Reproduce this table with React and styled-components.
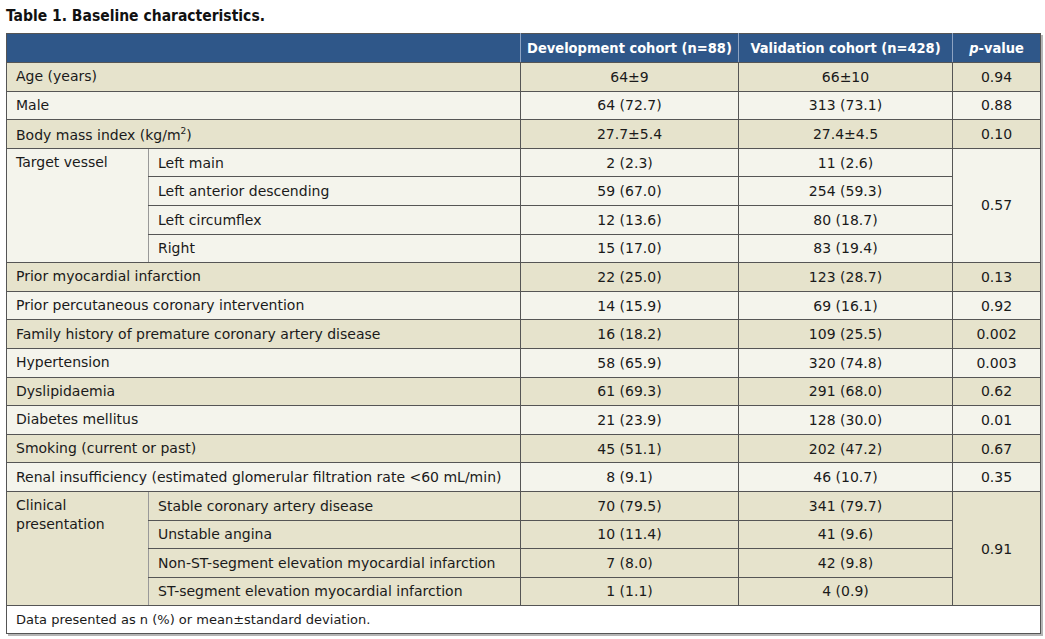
import React from "react";
import styled, { createGlobalStyle } from "styled-components";

const GlobalStyle = createGlobalStyle`
  html, body {
    margin: 0;
    padding: 0;
    background: #fff;
  }
  body {
    font-family: "DejaVu Sans", "Liberation Sans", sans-serif;
    color: #1a1a1a;
  }
`;

const Page = styled.div`
  width: 1045px;
  height: 639px;
  padding: 5px 0 0 6px;
  box-sizing: border-box;
`;

const Title = styled.h1`
  margin: 0 0 6px 0;
  font-family: "DejaVu Sans Condensed", "DejaVu Sans", sans-serif;
  font-stretch: condensed;
  font-weight: bold;
  font-size: 15.5px;
  line-height: 22px;
  color: #111;
`;

const Table = styled.table`
  width: 1034px;
  border-collapse: collapse;
  table-layout: fixed;
  font-size: 14px;
  border: 1px solid #555;
  box-shadow: 2px 2px 0 #b5b5b5;
`;

const HeadRow = styled.tr`
  background: #2f5789;
  height: 29px;
`;

const Th = styled.th`
  color: #fff;
  font-family: "DejaVu Sans Condensed", "DejaVu Sans", sans-serif;
  font-stretch: condensed;
  font-weight: bold;
  font-size: 14.5px;
  text-align: center;
  padding: 0 4px;
  border-left: 1px solid #8ea3c2;
  border-bottom: 1px solid #555;
  white-space: nowrap;
  &:first-child {
    border-left: none;
  }
`;

const Row = styled.tr`
  height: 28.6px;
  background: ${(p) => (p.$shade ? "#e6e3cc" : "#f4f4ec")};
`;

const Label = styled.td`
  padding: 0 9px;
  text-align: left;
  vertical-align: ${(p) => (p.$top ? "top" : "middle")};
  padding-top: ${(p) => (p.$top ? "4px" : "0")};
  line-height: 19px;
  border-bottom: 1px solid #555;
  border-left: 1px solid #555;
  white-space: ${(p) => (p.$wrap ? "normal" : "nowrap")};
`;

const Sub = styled.td`
  padding: 0 9px;
  text-align: left;
  border-bottom: 1px solid #555;
  border-left: 1px solid #999;
  white-space: nowrap;
`;

const Num = styled.td`
  text-align: center;
  border-bottom: 1px solid #555;
  border-left: 1px solid #555;
  white-space: nowrap;
`;

const Sup = styled.sup`
  font-size: 9px;
`;

const FootRow = styled.tr`
  height: 28px;
  background: #fff;
`;

const Foot = styled.td`
  padding: 0 9px;
  font-size: 13px;
`;

const simpleRows = (rows, startShade) =>
  rows.map((r, i) => (
    <Row key={i} $shade={(i + startShade) % 2 === 0}>
      <Label colSpan={2}>{r[0]}</Label>
      <Num>{r[1]}</Num>
      <Num>{r[2]}</Num>
      <Num>{r[3]}</Num>
    </Row>
  ));

const groupRows = (label, items, p, shade) =>
  items.map((r, i) => (
    <Row key={r[0]} $shade={shade}>
      {i === 0 && (
        <Label rowSpan={items.length} $top $wrap>
          {label}
        </Label>
      )}
      <Sub>{r[0]}</Sub>
      <Num>{r[1]}</Num>
      <Num>{r[2]}</Num>
      {i === 0 && <Num rowSpan={items.length}>{p}</Num>}
    </Row>
  ));

export default function App() {
  return (
    <Page>
      <GlobalStyle />
      <Title>Table 1. Baseline characteristics.</Title>
      <Table>
        <colgroup>
          <col style={{ width: 142 }} />
          <col style={{ width: 372 }} />
          <col style={{ width: 218 }} />
          <col style={{ width: 214 }} />
          <col style={{ width: 88 }} />
        </colgroup>
        <thead>
          <HeadRow>
            <Th colSpan={2}></Th>
            <Th>Development cohort (n=88)</Th>
            <Th>Validation cohort (n=428)</Th>
            <Th>
              <i>p</i>-value
            </Th>
          </HeadRow>
        </thead>
        <tbody>
          {simpleRows(
            [
              ["Age (years)", "64±9", "66±10", "0.94"],
              ["Male", "64 (72.7)", "313 (73.1)", "0.88"],
              [
                <span key="bmi">
                  Body mass index (kg/m<Sup>2</Sup>)
                </span>,
                "27.7±5.4",
                "27.4±4.5",
                "0.10",
              ],
            ],
            0
          )}
          {groupRows(
            "Target vessel",
            [
              ["Left main", "2 (2.3)", "11 (2.6)"],
              ["Left anterior descending", "59 (67.0)", "254 (59.3)"],
              ["Left circumflex", "12 (13.6)", "80 (18.7)"],
              ["Right", "15 (17.0)", "83 (19.4)"],
            ],
            "0.57",
            false
          )}
          {simpleRows(
            [
              ["Prior myocardial infarction", "22 (25.0)", "123 (28.7)", "0.13"],
              ["Prior percutaneous coronary intervention", "14 (15.9)", "69 (16.1)", "0.92"],
              ["Family history of premature coronary artery disease", "16 (18.2)", "109 (25.5)", "0.002"],
              ["Hypertension", "58 (65.9)", "320 (74.8)", "0.003"],
              ["Dyslipidaemia", "61 (69.3)", "291 (68.0)", "0.62"],
              ["Diabetes mellitus", "21 (23.9)", "128 (30.0)", "0.01"],
              ["Smoking (current or past)", "45 (51.1)", "202 (47.2)", "0.67"],
              ["Renal insufficiency (estimated glomerular filtration rate <60 mL/min)", "8 (9.1)", "46 (10.7)", "0.35"],
            ],
            0
          )}
          {groupRows(
            "Clinical presentation",
            [
              ["Stable coronary artery disease", "70 (79.5)", "341 (79.7)"],
              ["Unstable angina", "10 (11.4)", "41 (9.6)"],
              ["Non-ST-segment elevation myocardial infarction", "7 (8.0)", "42 (9.8)"],
              ["ST-segment elevation myocardial infarction", "1 (1.1)", "4 (0.9)"],
            ],
            "0.91",
            true
          )}
          <FootRow>
            <Foot colSpan={5}>Data presented as n (%) or mean±standard deviation.</Foot>
          </FootRow>
        </tbody>
      </Table>
    </Page>
  );
}
